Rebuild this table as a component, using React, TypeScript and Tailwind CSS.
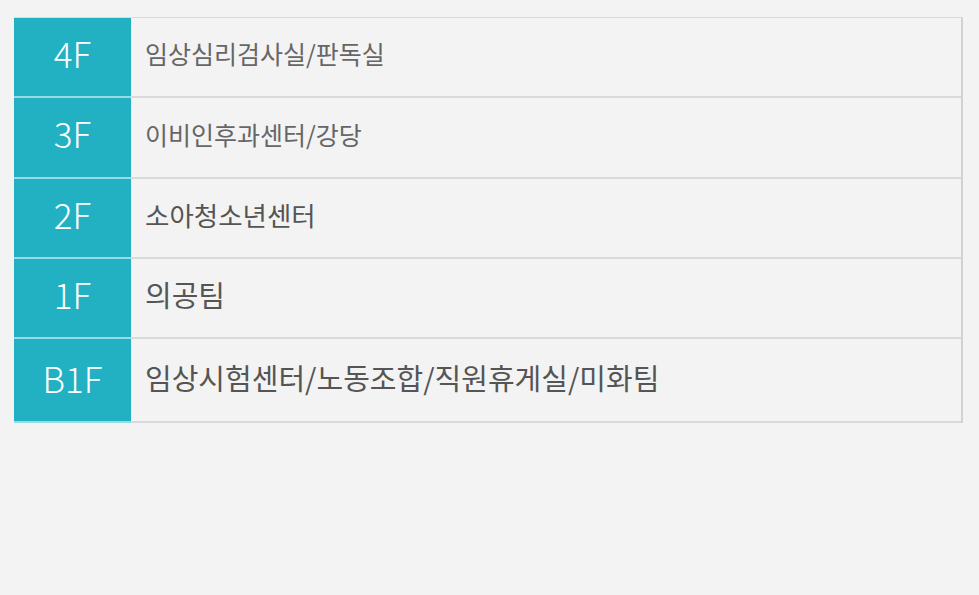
import React from "react";

const rows = [
  { f: "4F", t: "임상심리검사실/판독실", size: "text-[25px]", color: "text-[#666]", h: "h-[80px]" },
  { f: "3F", t: "이비인후과센터/강당", size: "text-[25px]", color: "text-[#666]", h: "h-[81px]" },
  { f: "2F", t: "소아청소년센터", size: "text-[26.5px]", color: "text-[#555]", h: "h-[80px]" },
  { f: "1F", t: "의공팀", size: "text-[29px]", color: "text-[#555]", h: "h-[80px]" },
  { f: "B1F", t: "임상시험센터/노동조합/직원휴게실/미화팀", size: "text-[29px]", color: "text-[#555]", h: "h-[84px]" },
];

export default function App() {
  return (
    <div
      className="min-h-screen w-full bg-[#f3f3f3] pt-[17px] pl-[14px]"
      style={{ fontFamily: '"Noto Sans CJK KR", "Noto Sans", sans-serif' }}
    >
      <div className="w-[949px] border-t border-[#dcdcdc] border-r-[2px] border-r-[#d2d2d2]">
        {rows.map((r, i) => (
          <div key={r.f} className={`flex ${r.h}`}>
            <div
              className={`w-[118px] shrink-0 bg-[#21b1c3] border-b-2 border-[#9adbe3] border-r border-r-[#e9f7f9] flex items-center justify-center text-white text-[35px] font-light ${
                i < 4 ? "pb-[8px]" : "pb-[4px]"
              }`}
            >
              {r.f}
            </div>
            <div
              className={`flex-1 border-b-2 border-[#d9d9d9] flex items-center pl-[13px] ${r.size} ${r.color} ${
                i < 4 ? "pb-[6px]" : "pb-[4px]"
              }`}
            >
              {r.t}
            </div>
          </div>
        ))}
      </div>
    </div>
  );
}
